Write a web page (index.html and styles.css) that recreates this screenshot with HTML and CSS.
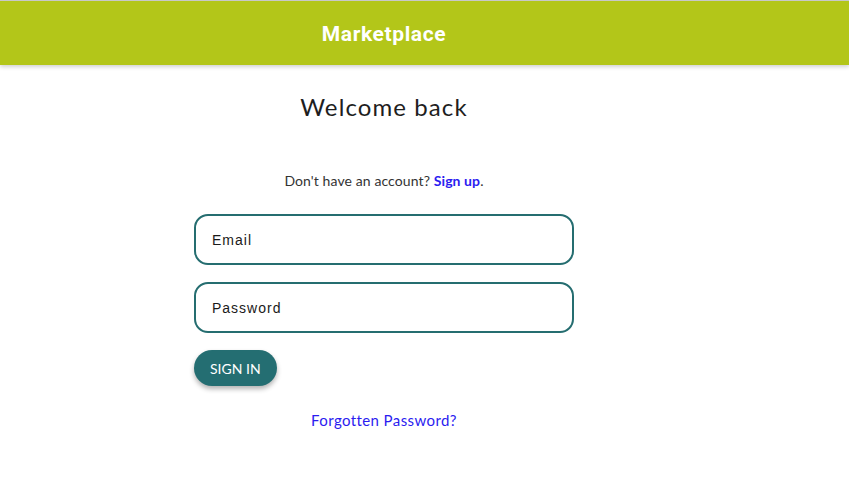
FILE: index.html
```html
<!DOCTYPE html>
<html>
<head>
<meta charset="utf-8">
<link rel="stylesheet" href="styles.css">
</head>
<body>
<header class="topbar">
  <div class="topbar-inner"><span class="brand">Marketplace</span></div>
</header>
<main class="page">
  <h1 class="title">Welcome back</h1>
  <p class="signup">Don't have an account? <a class="signup-link" href="#">Sign up</a>.</p>
  <form class="form">
    <input class="field" type="email" placeholder="Email">
    <input class="field" type="password" placeholder="Password">
    <div class="actions"><button class="btn" type="button">SIGN IN</button></div>
    <a class="forgot" href="#">Forgotten Password?</a>
  </form>
</main>
</body>
</html>
```
FILE: styles.css
```css
html, body {
  margin: 0;
  padding: 0;
  background: #fff;
}
body {
  font-family: Lato, "Noto Sans", sans-serif;
  color: #222;
  border-top: 1px solid #c8c8c8;
}
.topbar {
  background: #b3c619;
  height: 64px;
  box-shadow: 0 2px 4px rgba(0,0,0,0.18);
}
.topbar-inner {
  width: 768px;
  height: 64px;
  display: flex;
  align-items: center;
  justify-content: center;
}
.brand {
  font-family: Roboto, sans-serif;
  font-weight: 700;
  font-size: 21px;
  color: #fff;
  letter-spacing: 0.6px;
  margin-top: 2px;
}
.page {
  width: 768px;
  display: flex;
  flex-direction: column;
  align-items: center;
}
.title {
  margin: 27px 0 0;
  font-weight: 400;
  font-size: 24px;
  line-height: 30px;
  color: #1e1e1e;
  letter-spacing: 1.1px;
}
.signup {
  margin: 50px 0 0;
  font-size: 14px;
  line-height: 18px;
  color: #333;
  letter-spacing: 0.1px;
}
.signup-link {
  color: #2b1cf0;
  font-weight: 700;
  text-decoration: none;
}
.form {
  margin-top: 24px;
  width: 380px;
  display: flex;
  flex-direction: column;
  gap: 17px;
}
.field {
  box-sizing: border-box;
  width: 380px;
  height: 51px;
  border: 2px solid #256d70;
  border-radius: 14px;
  padding: 0 16px;
  font-family: "Liberation Sans", Arial, sans-serif;
  font-size: 14px;
  letter-spacing: 1px;
  outline: none;
  margin: 0;
}
.field::placeholder {
  color: #1a1a1a;
}
.actions {
  display: flex;
}
.btn {
  height: 36px;
  padding: 0 16px;
  border: none;
  border-radius: 18px;
  background: #246e72;
  color: #fff;
  font-family: Lato, sans-serif;
  font-size: 14px;
  box-shadow: 0 3px 5px rgba(0,0,0,0.3);
  cursor: pointer;
}
.forgot {
  align-self: center;
  margin-top: 8px;
  color: #2b1cf0;
  font-size: 15px;
  letter-spacing: 0.4px;
  text-decoration: none;
}
```
